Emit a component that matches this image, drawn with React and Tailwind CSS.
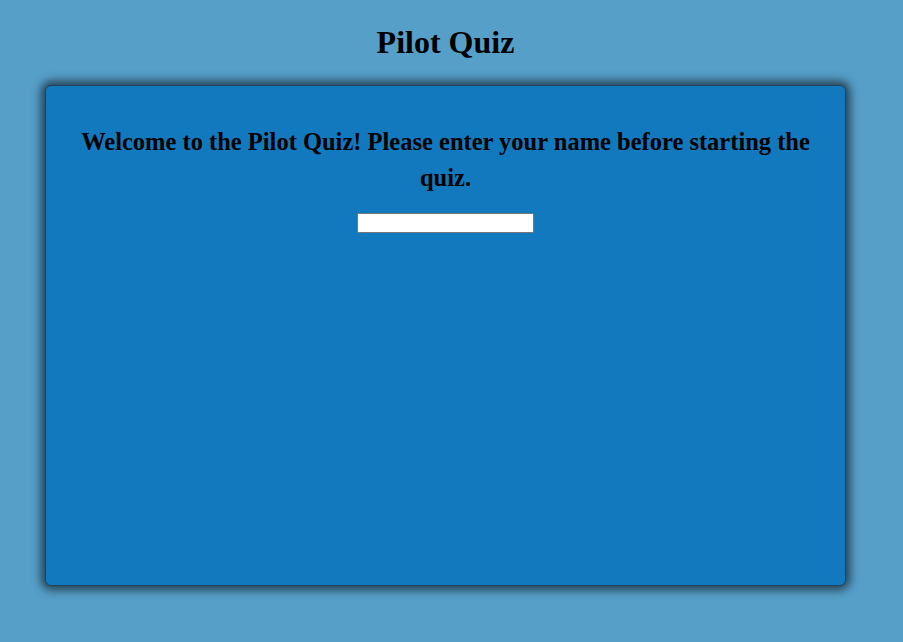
import React from 'react';

export default function App() {
  return (
    <div className="min-h-[642px] bg-[#569fc9] font-['Liberation_Serif',serif] text-black pt-[20px] pl-[45px]">
      <div className="w-[801px]">
        <h1 className="text-center text-[32px] font-bold leading-[44px]">Pilot Quiz</h1>
        <div className="mt-[21px] h-[501px] w-[801px] rounded-[6px] border border-[#22435a] bg-[#1379be] shadow-[0_0_10px_4px_rgba(0,0,0,0.6)] px-[20px] pt-[38px]">
          <p className="text-center text-[24.5px] font-bold leading-[36px]">
            Welcome to the Pilot Quiz! Please enter your name before starting the quiz.
          </p>
          <div className="mt-[17px] flex justify-center">
            <input
              type="text"
              className="h-[20px] w-[177px] border border-[#767676] bg-white"
            />
          </div>
        </div>
      </div>
    </div>
  );
}
